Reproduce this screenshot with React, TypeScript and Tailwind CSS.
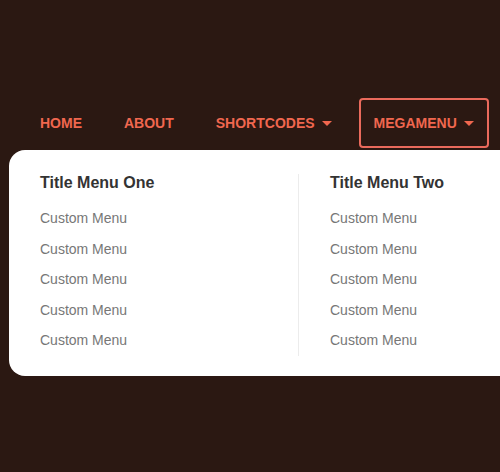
import React from 'react';

const navItems = [
    { label: 'HOME', caret: false, active: false },
    { label: 'ABOUT', caret: false, active: false },
    { label: 'SHORTCODES', caret: true, active: false },
    { label: 'MEGAMENU', caret: true, active: true },
];

const columns = [
    { title: 'Title Menu One', items: ['Custom Menu', 'Custom Menu', 'Custom Menu', 'Custom Menu', 'Custom Menu'] },
    { title: 'Title Menu Two', items: ['Custom Menu', 'Custom Menu', 'Custom Menu', 'Custom Menu', 'Custom Menu'] },
];

const Caret = () => (
    <span className="ml-[7px] inline-block h-0 w-0 border-x-[5px] border-t-[5px] border-x-transparent border-t-[#f0674f]" />
);

const App = () => {
    return (
        <div className="w-[500px] h-[472px] overflow-hidden bg-[#2b1812] font-['Liberation_Sans',Arial,sans-serif]">
            {/* top nav */}
            <nav className="flex items-center gap-[12px] pt-[98px] pl-[25px]">
                {navItems.map((item) => (
                    <a
                        key={item.label}
                        className={
                            'flex h-[50px] items-center rounded-[4px] border-2 px-[13px] text-[14px] font-bold text-[#f0674f] ' +
                            (item.active ? 'border-[#ea6a5c]' : 'border-transparent')
                        }
                    >
                        {item.label}
                        {item.caret && <Caret />}
                    </a>
                ))}
            </nav>

            {/* mega dropdown */}
            <div className="ml-[9px] mt-[2px] flex w-[540px] rounded-2xl bg-white pt-[24px] pb-[20px]">
                {columns.map((col, i) => (
                    <div
                        key={col.title}
                        className={i === 0 ? 'w-[289px] pl-[31px]' : 'border-l border-[#ececec] pl-[31px]'}
                    >
                        <div className="mb-[11px] text-[16px] leading-[18px] font-bold text-[#333]">{col.title}</div>
                        <ul>
                            {col.items.map((label, j) => (
                                <li key={j} className="text-[14px] leading-[30.5px] text-[#777]">
                                    {label}
                                </li>
                            ))}
                        </ul>
                    </div>
                ))}
            </div>
        </div>
    );
};

export default App;
